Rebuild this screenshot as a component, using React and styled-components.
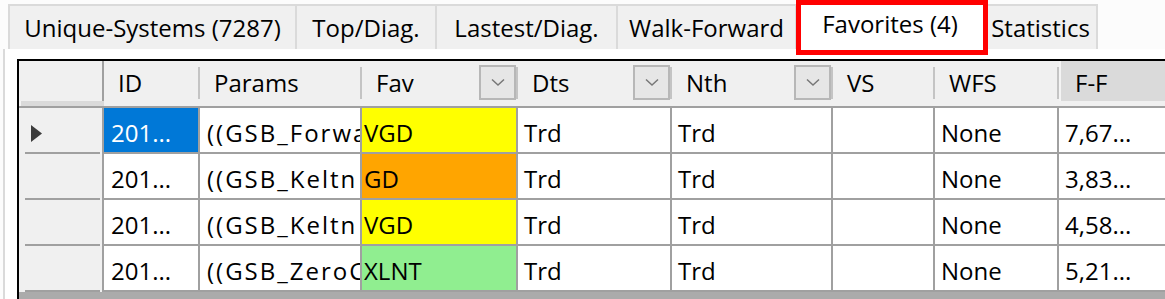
import React from 'react';
import styled, { createGlobalStyle } from 'styled-components';

const COLS = '85px 96px 162px 156px 154px 161px 102px 124px 200px';

const Global = createGlobalStyle`
  html, body { margin: 0; padding: 0; background: #fcfcfc; }
  body { font-family: "Open Sans", "Noto Sans", sans-serif; color: #000; }
`;

const Page = styled.div`
  position: relative;
  width: 1165px;
  height: 299px;
  overflow: hidden;
  display: flex;
  flex-direction: column;
  background: #fcfcfc;
`;

const TabStrip = styled.div`
  display: flex;
  align-items: flex-end;
  height: 49px;
  flex-shrink: 0;
  padding-left: 8px;
`;

const Tab = styled.div`
  box-sizing: border-box;
  flex-shrink: 0;
  width: ${p => p.$w}px;
  height: ${p => (p.$active ? 49 : 45)}px;
  display: flex;
  align-items: center;
  justify-content: center;
  white-space: nowrap;
  font-size: 24px;
  background: ${p => (p.$active ? '#ffffff' : '#f0f0f0')};
  border-top: 2px solid #dadada;
  border-right: 2px solid #dadada;
  border-left: ${p => (p.$first ? '2px solid #dadada' : 'none')};
  padding-bottom: ${p => (p.$active ? 4 : 0)}px;
`;

const Highlight = styled.div`
  position: absolute;
  left: 796px;
  top: 0;
  width: 192px;
  height: 55px;
  box-sizing: border-box;
  border: 5px solid #ff0000;
  pointer-events: none;
`;

const Panel = styled.div`
  flex: 1;
  display: flex;
  margin-left: 3px;
  border-left: 2px solid #dadada;
  background: #ffffff;
  padding: 10px 0 0 12px;
`;

const Grid = styled.div`
  flex: 1;
  display: flex;
  flex-direction: column;
  border-left: 2px solid #000;
  border-top: 2px solid #000;
  background: #ababab;
`;

const HeaderRow = styled.div`
  display: grid;
  grid-template-columns: ${COLS};
  height: 47px;
  box-sizing: border-box;
  background: #f0f0f0;
  border-bottom: 2px solid #a0a0a0;
  flex-shrink: 0;
`;

const Corner = styled.div`
  border-right: 2px solid #a0a0a0;
`;

const HeaderCell = styled.div`
  position: relative;
  box-sizing: border-box;
  display: flex;
  align-items: flex-end;
  padding: 0 2px 2px 14px;
  font-size: 24px;
  white-space: nowrap;
  background: ${p => (p.$sorted ? '#dadada' : 'transparent')};
  border-left: ${p => (p.$sorted ? '2px solid #f4f4f4' : 'none')};
  &::after {
    content: '';
    position: absolute;
    right: 0;
    top: 6px;
    bottom: 2px;
    width: 2px;
    background: #c4c4c4;
  }
`;

const HeaderLabel = styled.span`
  flex: 1;
  line-height: 33px;
`;

const DropButton = styled.div`
  margin-bottom: -1px;
  width: 37px;
  height: 35px;
  box-sizing: border-box;
  border: 2px solid #b7b7b7;
  background: #e6e6e6;
  display: flex;
  align-items: center;
  justify-content: center;
  flex-shrink: 0;
`;

const Row = styled.div`
  display: grid;
  grid-template-columns: ${COLS};
  height: 46px;
  flex-shrink: 0;
`;

const RowHeader = styled.div`
  position: relative;
  background: #f0f0f0;
  border-right: 2px solid #a0a0a0;
  display: flex;
  align-items: center;
  padding: 4px 0 0 12px;
  &::after {
    content: '';
    position: absolute;
    left: 6px;
    right: 2px;
    bottom: 0;
    height: 2px;
    background: #a0a0a0;
  }
`;

const Cell = styled.div`
  box-sizing: border-box;
  display: flex;
  align-items: center;
  padding: 5px 0 0 ${p => p.$pad ?? 6}px;
  font-size: 24px;
  letter-spacing: ${p => p.$spacing || 0}px;
  white-space: nowrap;
  overflow: hidden;
  background: ${p => p.$bg || '#ffffff'};
  color: ${p => p.$fg || '#000000'};
  border-right: 2px solid #a0a0a0;
  border-bottom: 2px solid #a0a0a0;
`;

const Chevron = () => (
  <svg width="16" height="9" viewBox="0 0 16 9">
    <polyline points="2,1.5 8,7 14,1.5" fill="none" stroke="#777777" strokeWidth="1.5" />
  </svg>
);

const Arrow = () => (
  <svg width="11" height="17" viewBox="0 0 11 17">
    <polygon points="0,0 11,8.5 0,17" fill="#3c3c3c" />
  </svg>
);

const tabs = [
  { label: 'Unique-Systems (7287)', w: 289 },
  { label: 'Top/Diag.', w: 140 },
  { label: 'Lastest/Diag.', w: 181 },
  { label: 'Walk-Forward', w: 179 },
  { label: 'Favorites (4)', w: 188, active: true },
  { label: 'Statistics', w: 113 },
];

const headers = [
  { label: 'ID' },
  { label: 'Params' },
  { label: 'Fav', drop: true },
  { label: 'Dts', drop: true },
  { label: 'Nth', drop: true },
  { label: 'VS' },
  { label: 'WFS' },
  { label: 'F-F', sorted: true },
];

const FAV_COLORS = { VGD: '#ffff00', GD: '#ffa500', XLNT: '#90ee90' };

const rows = [
  { id: '201...', params: '((GSB_Forwa', fav: 'VGD', dts: 'Trd', nth: 'Trd', vs: '', wfs: 'None', ff: '7,67...', current: true },
  { id: '201...', params: '((GSB_Keltn', fav: 'GD', dts: 'Trd', nth: 'Trd', vs: '', wfs: 'None', ff: '3,83...' },
  { id: '201...', params: '((GSB_Keltn', fav: 'VGD', dts: 'Trd', nth: 'Trd', vs: '', wfs: 'None', ff: '4,58...' },
  { id: '201...', params: '((GSB_ZeroC', fav: 'XLNT', dts: 'Trd', nth: 'Trd', vs: '', wfs: 'None', ff: '5,21...' },
];

export default function App() {
  return (
    <>
      <Global />
      <Page>
        <TabStrip>
          {tabs.map((t, i) => (
            <Tab key={t.label} $w={t.w} $active={t.active} $first={i === 0}>
              {t.label}
            </Tab>
          ))}
        </TabStrip>
        <Panel>
          <Grid>
            <HeaderRow>
              <Corner />
              {headers.map(h => (
                <HeaderCell key={h.label} $sorted={h.sorted}>
                  <HeaderLabel>{h.label}</HeaderLabel>
                  {h.drop && (
                    <DropButton>
                      <Chevron />
                    </DropButton>
                  )}
                </HeaderCell>
              ))}
              <HeaderCell $sorted />
            </HeaderRow>
            {rows.map((r, i) => (
              <Row key={i}>
                <RowHeader>{r.current && <Arrow />}</RowHeader>
                <Cell $pad={7} $bg={r.current ? '#0078d7' : undefined} $fg={r.current ? '#ffffff' : undefined}>{r.id}</Cell>
                <Cell $pad={7} $spacing={2}>{r.params}</Cell>
                <Cell $pad={2} $bg={FAV_COLORS[r.fav]}>{r.fav}</Cell>
                <Cell>{r.dts}</Cell>
                <Cell>{r.nth}</Cell>
                <Cell>{r.vs}</Cell>
                <Cell>{r.wfs}</Cell>
                <Cell>{r.ff}</Cell>
              </Row>
            ))}
          </Grid>
        </Panel>
        <Highlight />
      </Page>
    </>
  );
}
